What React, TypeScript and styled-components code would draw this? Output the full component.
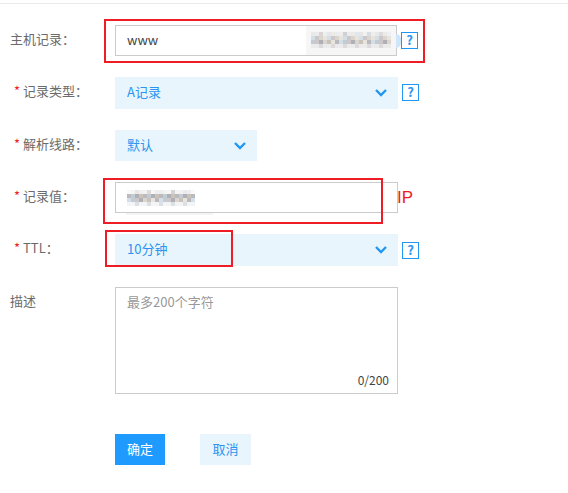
import React from "react";
import styled, { createGlobalStyle } from "styled-components";

const BLUE = "#2b94f0";
const PALE = "#e8f5fd";
const LINE = "#cbcbcb";
const RED = "#ee1c25";

const GlobalStyle = createGlobalStyle`
  html, body {
    margin: 0;
    padding: 0;
    background: #fff;
  }
  body {
    font-family: "Noto Sans CJK SC", "Liberation Sans", sans-serif;
    font-size: 13px;
  }
`;

const Page = styled.div`
  position: relative;
  width: 568px;
  height: 493px;
  overflow: hidden;
  padding-top: 3px;
  box-sizing: border-box;
`;

const TopLine = styled.div`
  height: 1px;
  background: #e9e9e9;
`;

const Form = styled.form`
  display: flex;
  flex-direction: column;
  padding-top: 21px;
`;

const Row = styled.div<{ $gap: number }>`
  display: flex;
  align-items: flex-start;
  margin-bottom: ${(p) => p.$gap}px;
`;

const Label = styled.label<{ $required?: boolean }>`
  width: 115px;
  flex: none;
  box-sizing: border-box;
  padding-left: ${(p) => (p.$required ? 14 : 10)}px;
  color: #6b6b6b;
  line-height: 27px;
`;

const Star = styled.span`
  color: ${RED};
  margin-right: 3px;
`;

const TextInput = styled.input<{ $width: number }>`
  width: ${(p) => p.$width}px;
  height: 31px;
  flex: none;
  box-sizing: border-box;
  border: 1px solid ${LINE};
  padding: 0 11px 2px;
  margin: 0;
  font: inherit;
  color: #444;
  outline: none;
`;

const Select = styled.div<{ $width: number; $height: number }>`
  width: ${(p) => p.$width}px;
  height: ${(p) => p.$height}px;
  flex: none;
  box-sizing: border-box;
  padding: 0 11px 0 12px;
  background: ${PALE};
  color: ${BLUE};
  display: flex;
  align-items: center;
  justify-content: space-between;
`;

const SelectText = styled.span`
  padding-bottom: 3px;
`;

const Chevron = styled.svg`
  width: 12px;
  height: 8px;
  color: #2196f3;
`;

const Help = styled.span<{ $top: number }>`
  width: 17px;
  height: 17px;
  flex: none;
  box-sizing: border-box;
  border: 1px solid #2196f3;
  margin: ${(p) => p.$top}px 0 0 4px;
  color: ${BLUE};
  font-weight: 700;
  font-size: 13px;
  line-height: 14px;
  text-align: center;
`;

const AreaWrap = styled.div`
  position: relative;
  width: 283px;
  height: 107px;
`;

const Area = styled.textarea`
  width: 100%;
  height: 100%;
  display: block;
  box-sizing: border-box;
  border: 1px solid ${LINE};
  padding: 4px 11px;
  margin: 0;
  font: inherit;
  resize: none;
  outline: none;
  &::placeholder {
    color: #999;
  }
`;

const Count = styled.span`
  position: absolute;
  right: 9px;
  bottom: 6px;
  font-size: 12px;
  line-height: 16px;
  color: #444;
`;

const Actions = styled.div`
  display: flex;
  gap: 35px;
  padding-left: 115px;
`;

const Button = styled.button<{ $primary?: boolean }>`
  width: ${(p) => (p.$primary ? 50 : 51)}px;
  height: 31px;
  border: 0;
  padding: 0 0 2px;
  font: inherit;
  background: ${(p) => (p.$primary ? "#1f9bff" : PALE)};
  color: ${(p) => (p.$primary ? "#fff" : BLUE)};
`;

const Annotation = styled.div<{ $x: number; $y: number; $w: number; $h: number }>`
  position: absolute;
  left: ${(p) => p.$x}px;
  top: ${(p) => p.$y}px;
  width: ${(p) => p.$w}px;
  height: ${(p) => p.$h}px;
  box-sizing: border-box;
  border: 2px solid ${RED};
  pointer-events: none;
`;

const IpNote = styled.span`
  position: absolute;
  left: 397px;
  top: 187px;
  color: ${RED};
  font-family: "Liberation Sans", sans-serif;
  font-size: 17px;
  line-height: 22px;
`;

const Masked = styled.svg<{ $x: number; $y: number }>`
  position: absolute;
  left: ${(p) => p.$x}px;
  top: ${(p) => p.$y}px;
  filter: blur(0.4px);
`;

const Patch = styled.div<{ $x: number; $y: number; $w: number; $h: number; $tone: string }>`
  position: absolute;
  left: ${(p) => p.$x}px;
  top: ${(p) => p.$y}px;
  width: ${(p) => p.$w}px;
  height: ${(p) => p.$h}px;
  background: ${(p) => p.$tone};
`;

const Bubble = styled.div`
  position: absolute;
  left: 396px;
  top: 34px;
  width: 5px;
  height: 14px;
  border-radius: 0 5px 5px 0;
  background: #cfe5fa;
`;

const mosaicColors = ["#c9c2c4", "#b3b2b8", "#d8d2cc", "#bcc6ce", "#e6e2dc", "#a9a7ad", "#cfdbe4", "#c4bcb6"];

// pixelated strip standing in for the blurred-out text
const Mosaic = ({ x, y, w, h, seed }: { x: number; y: number; w: number; h: number; seed: number }) => {
  const cols = Math.floor(w / 4);
  const rows = Math.floor(h / 4);
  const cells = [];
  for (let c = 0; c < cols; c++) {
    for (let r = 0; r < rows; r++) {
      const n = (c * 7 + r * 13 + seed + c * r * 3) % mosaicColors.length;
      const edge = r === 0 || r === rows - 1;
      cells.push(
        <rect
          key={`${c}-${r}`}
          x={c * 4}
          y={r * 4}
          width={4}
          height={4}
          fill={mosaicColors[n]}
          opacity={edge ? ((c + seed) % 3 === 0 ? 0.55 : 0.2) : 0.9}
        />,
      );
    }
  }
  return (
    <Masked $x={x} $y={y} width={w} height={h} viewBox={`0 0 ${w} ${h}`}>
      {cells}
    </Masked>
  );
};

const Arrow = () => (
  <Chevron viewBox="0 0 12 8" fill="none" stroke="currentColor" strokeWidth="2.4">
    <path d="M1 1 L6 6 L11 1" />
  </Chevron>
);

export default function App() {
  return (
    <Page>
      <GlobalStyle />
      <TopLine />
      <Form>
        <Row $gap={21}>
          <Label>主机记录：</Label>
          <TextInput $width={282} value="www" readOnly />
          <Help $top={7}>?</Help>
        </Row>
        <Row $gap={21}>
          <Label $required><Star>*</Star>记录类型：</Label>
          <Select $width={283} $height={32}><SelectText>A记录</SelectText><Arrow /></Select>
          <Help $top={7}>?</Help>
        </Row>
        <Row $gap={21}>
          <Label $required><Star>*</Star>解析线路：</Label>
          <Select $width={142} $height={31}><SelectText>默认</SelectText><Arrow /></Select>
        </Row>
        <Row $gap={21}>
          <Label $required><Star>*</Star>记录值：</Label>
          <TextInput $width={283} readOnly />
        </Row>
        <Row $gap={21}>
          <Label $required><Star>*</Star>TTL：</Label>
          <Select $width={283} $height={32}><SelectText>10分钟</SelectText><Arrow /></Select>
          <Help $top={8}>?</Help>
        </Row>
        <Row $gap={40}>
          <Label>描述</Label>
          <AreaWrap>
            <Area placeholder="最多200个字符" readOnly />
            <Count>0/200</Count>
          </AreaWrap>
        </Row>
        <Actions>
          <Button type="button" $primary>确定</Button>
          <Button type="button">取消</Button>
        </Actions>
      </Form>
      <Patch $x={306} $y={26} $w={90} $h={29} $tone="#f6f6f6" />
      <Bubble />
      <Patch $x={126} $y={213} $w={87} $h={2} $tone="#f3f3f3" />
      <Mosaic x={311} y={32} w={80} h={16} seed={1} />
      <Mosaic x={127} y={190} w={68} h={16} seed={4} />
      <Annotation $x={104} $y={19} $w={321} $h={44} />
      <Annotation $x={103} $y={178} $w={280} $h={46} />
      <Annotation $x={105} $y={230} $w={128} $h={37} />
      <IpNote>IP</IpNote>
    </Page>
  );
}
